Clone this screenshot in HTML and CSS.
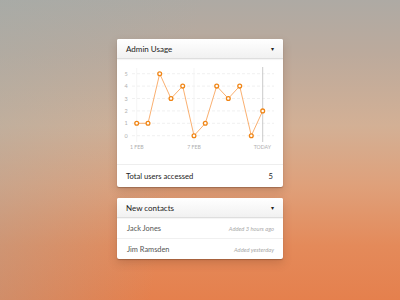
FILE: index.html
```html
<!DOCTYPE html>
<html>
<head>
<meta charset="utf-8">
<link rel="stylesheet" href="styles.css">
</head>
<body>
<div class="stack">
  <section class="card">
    <header class="card-head">
      <span class="title">Admin Usage</span>
      <span class="caret">▾</span>
    </header>
    <div class="chart">
      <svg width="166" height="105" viewBox="0 0 166 105">
        <g class="grid">
          <line x1="15" y1="14.7" x2="157" y2="14.7"/>
          <line x1="15" y1="27.1" x2="157" y2="27.1"/>
          <line x1="15" y1="39.5" x2="157" y2="39.5"/>
          <line x1="15" y1="51.9" x2="157" y2="51.9"/>
          <line x1="15" y1="64.3" x2="157" y2="64.3"/>
          <line x1="15" y1="76.7" x2="157" y2="76.7"/>
        </g>
        <g class="vgrid">
          <line x1="19.7" y1="9" x2="19.7" y2="83"/>
          <line x1="77" y1="9" x2="77" y2="83"/>
        </g>
        <line class="today" x1="145.7" y1="8" x2="145.7" y2="83"/>
        <g class="ylab">
          <text x="9" y="16.7">5</text>
          <text x="9" y="29.1">4</text>
          <text x="9" y="41.5">3</text>
          <text x="9" y="53.9">2</text>
          <text x="9" y="66.3">1</text>
          <text x="9" y="78.7">0</text>
        </g>
        <g class="xlab">
          <text x="19.7" y="90">1 FEB</text>
          <text x="77" y="90">7 FEB</text>
          <text x="145.3" y="90">TODAY</text>
        </g>
        <polyline class="series" points="19.7,64.3 31,64.3 42.7,14.7 54,39.5 65.7,27.1 77,76.7 88.3,64.3 99.7,27.1 111.3,39.5 122.7,27.1 134.3,76.7 145.7,51.9"/>
        <g class="dots">
          <circle cx="19.7" cy="64.3" r="1.9"/>
          <circle cx="31" cy="64.3" r="1.9"/>
          <circle cx="42.7" cy="14.7" r="1.9"/>
          <circle cx="54" cy="39.5" r="1.9"/>
          <circle cx="65.7" cy="27.1" r="1.9"/>
          <circle cx="77" cy="76.7" r="1.9"/>
          <circle cx="88.3" cy="64.3" r="1.9"/>
          <circle cx="99.7" cy="27.1" r="1.9"/>
          <circle cx="111.3" cy="39.5" r="1.9"/>
          <circle cx="122.7" cy="27.1" r="1.9"/>
          <circle cx="134.3" cy="76.7" r="1.9"/>
          <circle cx="145.7" cy="51.9" r="1.9"/>
        </g>
      </svg>
    </div>
    <div class="total">
      <span>Total users accessed</span>
      <span class="num">5</span>
    </div>
  </section>

  <section class="card">
    <header class="card-head">
      <span class="title">New contacts</span>
      <span class="caret">▾</span>
    </header>
    <div class="row">
      <span class="name">Jack Jones</span>
      <span class="when">Added 3 hours ago</span>
    </div>
    <div class="row">
      <span class="name">Jim Ramsden</span>
      <span class="when">Added yesterday</span>
    </div>
  </section>
</div>
</body>
</html>
```

FILE: styles.css
```css
html, body {
  margin: 0;
  padding: 0;
}
body {
  width: 400px;
  height: 300px;
  overflow: hidden;
  font-family: Lato, "Open Sans", "Liberation Sans", sans-serif;
  background:
    linear-gradient(100deg, rgba(160,172,170,0.4) 0%, rgba(160,172,170,0) 45%),
    linear-gradient(180deg, #aeaaa4 0%, #bcaa9c 18%, #d3b095 42%, #dfa07a 62%, #e48a5a 82%, #e5804d 100%);
}
.stack {
  display: flex;
  flex-direction: column;
  align-items: center;
  gap: 11px;
  padding-top: 39px;
}
.card {
  width: 166px;
  background: #fff;
  border-radius: 2px;
  box-shadow: 0 1px 1px rgba(90,50,30,0.35), 0 4px 10px rgba(90,50,30,0.22);
  overflow: hidden;
}
.card-head {
  height: 19px;
  display: flex;
  align-items: center;
  justify-content: space-between;
  padding: 0 9px 0 9px;
  background: linear-gradient(180deg, #ffffff 0%, #f1f1f1 100%);
  border-bottom: 1px solid #dedede;
  box-shadow: 0 1px 1px rgba(0,0,0,0.04);
}
.title {
  font-size: 8px;
  color: #222;
}
.caret {
  font-size: 6px;
  color: #222;
}
.chart {
  height: 105px;
}
.chart svg {
  display: block;
}
.grid line {
  stroke: #ececec;
  stroke-width: 0.8;
  stroke-dasharray: 3 2;
}
.vgrid line {
  stroke: #f2f2f2;
  stroke-width: 0.8;
}
.today {
  stroke: #c4c4c4;
  stroke-width: 0.9;
}
.ylab text {
  font-family: Lato, "Liberation Sans", sans-serif;
  font-size: 5.5px;
  fill: #b0b0b0;
  text-anchor: middle;
}
.xlab text {
  font-family: Lato, "Liberation Sans", sans-serif;
  font-size: 5.2px;
  fill: #b0b0b0;
  text-anchor: middle;
}
.series {
  fill: none;
  stroke: #f8a660;
  stroke-width: 0.9;
}
.dots circle {
  fill: #fff;
  stroke: #f08515;
  stroke-width: 1.3;
}
.total {
  height: 22px;
  border-top: 1px solid #eeeeee;
  display: flex;
  align-items: center;
  justify-content: space-between;
  padding: 0 10px 0 9px;
  font-size: 7.6px;
  color: #222;
}
.row {
  height: 20px;
  display: flex;
  align-items: center;
  justify-content: space-between;
  padding: 0 9px 0 10px;
  border-top: 1px solid #f0f0f0;
}
.card-head + .row {
  border-top: none;
}
.name {
  font-size: 7.4px;
  color: #555;
}
.when {
  font-size: 5.8px;
  font-style: italic;
  color: #aaa;
}
```
